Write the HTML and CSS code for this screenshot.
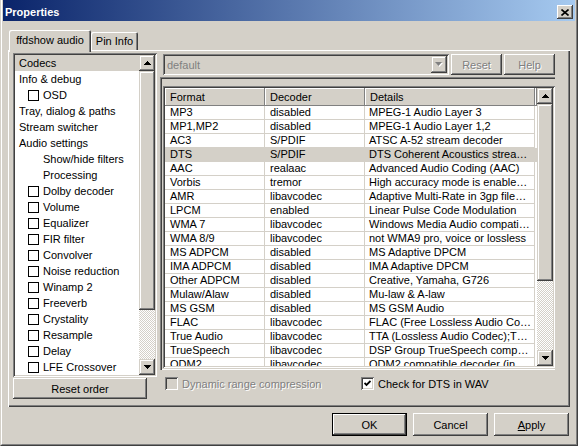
FILE: index.html
```html
<!DOCTYPE html>
<html lang="en">
<head>
    <meta charset="UTF-8">
    <meta name="viewport" content="width=device-width, initial-scale=1.0">
    <title>Properties</title>
    <link rel="stylesheet" href="styles.css">
</head>
<body>
  <div class="window">
    <div class="frame">

      <!-- title bar -->
      <div class="titlebar">
        <span class="title">Properties</span>
        <span class="close-btn">
          <svg width="8" height="7" viewBox="0 0 8 7"><path d="M0.5 0.5L7.5 6.5M7.5 0.5L0.5 6.5" stroke="black" stroke-width="1.6"/></svg>
        </span>
      </div>

      <div class="client">
        <div class="tabs">
          <div class="tab tab-active">ffdshow audio</div>
          <div class="tab tab-pin">Pin Info</div>
        </div>

        <div class="panel">
          <!-- left side: page tree -->
          <div class="left">
            <div class="tree sunken">
              <div class="tree-items">
                <div class="item item-sel">Codecs</div>
                <div class="item">Info &amp; debug</div>
                <div class="item sub"><span class="cb"></span>OSD</div>
                <div class="item">Tray, dialog &amp; paths</div>
                <div class="item">Stream switcher</div>
                <div class="item">Audio settings</div>
                <div class="item sub-plain">Show/hide filters</div>
                <div class="item sub-plain">Processing</div>
                <div class="item sub"><span class="cb"></span>Dolby decoder</div>
                <div class="item sub"><span class="cb"></span>Volume</div>
                <div class="item sub"><span class="cb"></span>Equalizer</div>
                <div class="item sub"><span class="cb"></span>FIR filter</div>
                <div class="item sub"><span class="cb"></span>Convolver</div>
                <div class="item sub"><span class="cb"></span>Noise reduction</div>
                <div class="item sub"><span class="cb"></span>Winamp 2</div>
                <div class="item sub"><span class="cb"></span>Freeverb</div>
                <div class="item sub"><span class="cb"></span>Crystality</div>
                <div class="item sub"><span class="cb"></span>Resample</div>
                <div class="item sub"><span class="cb"></span>Delay</div>
                <div class="item sub"><span class="cb"></span>LFE Crossover</div>
              </div>
              <div class="scrollbar">
                <div class="sb-btn"><svg width="7" height="4" viewBox="0 0 7 4" shape-rendering="crispEdges"><polygon points="3.5,0 7,4 0,4" fill="black"/></svg></div>
                <div class="sb-thumb tree-thumb"></div>
                <div class="sb-track"></div>
                <div class="sb-btn"><svg width="7" height="4" viewBox="0 0 7 4" shape-rendering="crispEdges"><polygon points="0,0 7,0 3.5,4" fill="black"/></svg></div>
              </div>
            </div>
            <button class="btn reset-order">Reset order</button>
          </div>

          <!-- right side: codecs page -->
          <div class="right">
            <div class="toolbar">
              <div class="combo sunken">
                <span class="combo-text">default</span>
                <span class="combo-drop"><svg width="8" height="5" viewBox="0 0 8 5"><polygon points="1,1 8,1 4.5,5" fill="white"/><polygon points="0,0 7,0 3.5,4" fill="#808080"/></svg></span>
              </div>
              <button class="btn btn-small" disabled>Reset</button>
              <button class="btn btn-small" disabled>Help</button>
            </div>

            <div class="box">
              <div class="listview sunken">
                <div class="lv-main">
                  <div class="lv-head">
                    <div class="lv-hcell">Format</div>
                    <div class="lv-hcell">Decoder</div>
                    <div class="lv-hcell lv-hdetails">Details</div>
                    <div class="lv-hcell lv-hfill"></div>
                  </div>
                  <div class="lv-rows">
                    <div class="lv-row"><span>MP3</span><span>disabled</span><span>MPEG-1 Audio Layer 3</span></div>
                    <div class="lv-row"><span>MP1,MP2</span><span>disabled</span><span>MPEG-1 Audio Layer 1,2</span></div>
                    <div class="lv-row"><span>AC3</span><span>S/PDIF</span><span>ATSC A-52 stream decoder</span></div>
                    <div class="lv-row lv-sel"><span>DTS</span><span>S/PDIF</span><span>DTS Coherent Acoustics strea…</span></div>
                    <div class="lv-row"><span>AAC</span><span>realaac</span><span>Advanced Audio Coding (AAC)</span></div>
                    <div class="lv-row"><span>Vorbis</span><span>tremor</span><span>High accuracy mode is enable…</span></div>
                    <div class="lv-row"><span>AMR</span><span>libavcodec</span><span>Adaptive Multi-Rate in 3gp file…</span></div>
                    <div class="lv-row"><span>LPCM</span><span>enabled</span><span>Linear Pulse Code Modulation</span></div>
                    <div class="lv-row"><span>WMA 7</span><span>libavcodec</span><span>Windows Media Audio compati…</span></div>
                    <div class="lv-row"><span>WMA 8/9</span><span>libavcodec</span><span>not WMA9 pro, voice or lossless</span></div>
                    <div class="lv-row"><span>MS ADPCM</span><span>disabled</span><span>MS Adaptive DPCM</span></div>
                    <div class="lv-row"><span>IMA ADPCM</span><span>disabled</span><span>IMA Adaptive DPCM</span></div>
                    <div class="lv-row"><span>Other ADPCM</span><span>disabled</span><span>Creative, Yamaha, G726</span></div>
                    <div class="lv-row"><span>Mulaw/Alaw</span><span>disabled</span><span>Mu-law &amp; A-law</span></div>
                    <div class="lv-row"><span>MS GSM</span><span>disabled</span><span>MS GSM Audio</span></div>
                    <div class="lv-row"><span>FLAC</span><span>libavcodec</span><span>FLAC (Free Lossless Audio Co…</span></div>
                    <div class="lv-row"><span>True Audio</span><span>libavcodec</span><span>TTA (Lossless Audio Codec);T…</span></div>
                    <div class="lv-row"><span>TrueSpeech</span><span>libavcodec</span><span>DSP Group TrueSpeech comp…</span></div>
                    <div class="lv-row"><span>QDM2</span><span>libavcodec</span><span>QDM2 compatible decoder (in…</span></div>
                  </div>
                </div>
                <div class="scrollbar">
                  <div class="sb-btn"><svg width="7" height="4" viewBox="0 0 7 4" shape-rendering="crispEdges"><polygon points="3.5,0 7,4 0,4" fill="black"/></svg></div>
                  <div class="sb-thumb lv-thumb"></div>
                  <div class="sb-track"></div>
                  <div class="sb-btn"><svg width="7" height="4" viewBox="0 0 7 4" shape-rendering="crispEdges"><polygon points="0,0 7,0 3.5,4" fill="black"/></svg></div>
                </div>
              </div>
            </div>

            <div class="options">
              <label class="option option-disabled"><span class="check check-disabled"></span>Dynamic range compression</label>
              <label class="option"><span class="check"><svg width="7" height="7" viewBox="0 0 7 7"><path d="M0.5 3L2.5 5L6.5 1" fill="none" stroke="black" stroke-width="1.8"/></svg></span>Check for DTS in WAV</label>
            </div>
          </div>
        </div>

        <!-- dialog buttons -->
        <div class="dialog-buttons">
          <button class="btn btn-dialog btn-default">OK</button>
          <button class="btn btn-dialog">Cancel</button>
          <button class="btn btn-dialog"><u>A</u>pply</button>
        </div>
      </div>
    </div>
  </div>
</body>
</html>
```

FILE: styles.css
```css
body{
  margin: 0;
  background-color: #d4d0c8;
  font-family: "Liberation Sans", Arial, sans-serif;
  font-size: 11px;
  color: black;
}

/* outer window frame */
.window{
  width: 578px;
  height: 446px;
  box-sizing: border-box;
  border-left: 1px solid #d4d0c8;
  border-right: 1px solid #404040;
  border-bottom: 1px solid #404040;
}

.frame{
  height: 100%;
  box-sizing: border-box;
  border-left: 1px solid white;
  border-right: 1px solid #808080;
  border-bottom: 1px solid #808080;
  padding: 0 1px;
  display: flex;
  flex-direction: column;
}

.titlebar{
  height: 21px;
  box-sizing: border-box;
  padding: 3px 2px 0 2px;
  background: linear-gradient(to right, #0a246a, #a6caf0);
  display: flex;
  align-items: center;
  justify-content: space-between;
}

.title{
  color: white;
  font-weight: bold;
}

.close-btn{
  width: 16px;
  height: 14px;
  background-color: #d4d0c8;
  box-shadow: inset -1px -1px #404040, inset 1px 1px white, inset -2px -2px #808080;
  display: flex;
  align-items: center;
  justify-content: center;
}

.client{
  flex: 1;
  padding: 9px 5px 0 5px;
  display: flex;
  flex-direction: column;
}

/* tabs */
.tabs{
  height: 20px;
  padding-left: 1px;
  display: flex;
  align-items: flex-end;
}

.tab{
  height: 18px;
  box-sizing: border-box;
  padding-top: 3px;
  text-align: center;
  border-radius: 2px 2px 0 0;
  box-shadow: inset 1px 1px white, inset -1px 0 #404040, inset -2px 0 #808080;
}

.tab-active{
  width: 82px;
  height: 22px;
  padding-top: 4px;
  margin-bottom: -2px;
  position: relative;
  z-index: 1;
  background-color: #d4d0c8;
}

.tab-pin{
  width: 47px;
}

.panel{
  height: 357px;
  box-sizing: border-box;
  padding: 3px 0 0 5px;
  box-shadow: inset 1px 1px white, inset -1px -1px #404040, inset -2px -2px #808080;
  display: flex;
}

.sunken{
  box-shadow: inset 1px 1px #808080, inset -1px -1px white, inset 2px 2px #404040, inset -2px -2px #d4d0c8;
}

/* left tree */
.left{
  width: 144px;
  display: flex;
  flex-direction: column;
}

.tree{
  height: 324px;
  box-sizing: border-box;
  padding: 2px;
  background-color: white;
  display: flex;
}

.tree-items{
  flex: 1;
}

.item{
  height: 16px;
  padding-left: 4px;
  display: flex;
  align-items: center;
  white-space: nowrap;
}

.item-sel{
  background-color: #d4d0c8;
}

.sub{
  padding-left: 13px;
}

.sub-plain{
  padding-left: 28px;
}

.cb{
  width: 11px;
  height: 11px;
  box-sizing: border-box;
  border: 1px solid black;
  margin-right: 4px;
}

/* scrollbars */
.scrollbar{
  width: 16px;
  display: flex;
  flex-direction: column;
}

.sb-btn, .sb-thumb{
  background-color: #d4d0c8;
  box-shadow: inset -1px -1px #404040, inset 1px 1px #d4d0c8, inset -2px -2px #808080, inset 2px 2px white;
}

.sb-btn{
  height: 16px;
  display: flex;
  align-items: center;
  justify-content: center;
}

.sb-track{
  flex: 1;
  background: repeating-conic-gradient(#d4d0c8 0 25%, white 0 50%) 0 0 / 2px 2px;
}

.tree-thumb{
  height: 239px;
}

.lv-thumb{
  height: 177px;
}

.btn{
  font-family: "Liberation Sans", Arial, sans-serif;
  font-size: 11px;
  color: black;
  background-color: #d4d0c8;
  border: none;
  padding: 0;
  box-shadow: inset -1px -1px #404040, inset 1px 1px white, inset -2px -2px #808080;
}

.btn:disabled{
  color: #808080;
  text-shadow: 1px 1px white;
}

.reset-order{
  width: 134px;
  height: 21px;
  margin-top: 1px;
}

/* right page */
.right{
  margin-left: 3px;
  flex: 1;
  display: flex;
  flex-direction: column;
}

.toolbar{
  margin: 1px 0 0 3px;
  height: 21px;
  display: flex;
}

.combo{
  width: 286px;
  box-sizing: border-box;
  padding: 2px;
  display: flex;
  align-items: center;
  justify-content: space-between;
}

.combo-text{
  padding-left: 2px;
  color: #808080;
}

.combo-drop{
  width: 16px;
  height: 17px;
  background-color: #d4d0c8;
  box-shadow: inset -1px -1px #404040, inset 1px 1px #d4d0c8, inset -2px -2px #808080, inset 2px 2px white;
  display: flex;
  align-items: center;
  justify-content: center;
}

.btn-small{
  width: 51px;
  height: 21px;
  margin-left: 2px;
}

.box{
  margin-top: 2px;
  width: 395px;
  height: 293px;
  box-sizing: border-box;
  padding: 9px 0 1px 3px;
  box-shadow: inset 1px 1px #808080, inset 2px 2px #404040, inset 0 -1px white;
}

/* codec list */
.listview{
  width: 392px;
  height: 282px;
  box-sizing: border-box;
  padding: 2px;
  background-color: white;
  display: flex;
}

.lv-main{
  flex: 1;
  overflow: hidden;
}

.lv-head{
  display: flex;
  height: 18px;
}

.lv-hcell{
  width: 100px;
  box-sizing: border-box;
  padding: 3px 0 0 5px;
  background-color: #d4d0c8;
  box-shadow: inset -1px -1px #808080, inset 1px 1px white;
}

.lv-hdetails{
  width: 170px;
}

.lv-hfill{
  flex: 1;
  padding: 0;
}

.lv-rows{
  height: 260px;
  overflow: hidden;
}

.lv-row{
  display: grid;
  grid-template-columns: 100px 100px 170px;
  height: 14px;
}

.lv-row span{
  box-sizing: border-box;
  padding-left: 5px;
  line-height: 13px;
  border-right: 1px solid #d4d0c8;
  border-bottom: 1px solid #d4d0c8;
  white-space: nowrap;
  overflow: hidden;
}

.lv-row span:last-child{
  padding-left: 4px;
}

.lv-sel{
  background-color: #d4d0c8;
}

/* checkboxes under the list */
.options{
  margin-top: 7px;
  padding-left: 5px;
  display: grid;
  grid-template-columns: 196px auto;
}

.option{
  display: flex;
  align-items: center;
  height: 13px;
}

.option-disabled{
  color: #808080;
  text-shadow: 1px 1px white;
}

.check{
  width: 13px;
  height: 13px;
  box-sizing: border-box;
  margin-right: 4px;
  background-color: white;
  box-shadow: inset 1px 1px #808080, inset -1px -1px white, inset 2px 2px #404040, inset -2px -2px #d4d0c8;
  display: flex;
  align-items: center;
  justify-content: center;
}

.check-disabled{
  background-color: #d4d0c8;
}

.dialog-buttons{
  margin-top: 6px;
  padding-right: 1px;
  display: flex;
  justify-content: flex-end;
  gap: 6px;
}

.btn-dialog{
  width: 75px;
  height: 23px;
}

.btn-default{ /* OK button has the black outline */
  box-shadow: inset 0 0 0 1px black, inset -2px -2px #404040, inset 2px 2px white, inset -3px -3px #808080;
}
```
